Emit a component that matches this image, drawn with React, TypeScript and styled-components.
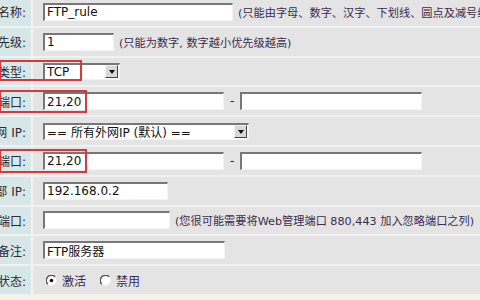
import React from "react";
import styled, { createGlobalStyle } from "styled-components";

const GlobalStyle = createGlobalStyle`
  html, body {
    margin: 0;
    padding: 0;
    background: #f5f3e6;
    overflow: hidden;
  }
  body {
    font-family: "DejaVu Sans", "Noto Sans CJK SC", sans-serif;
  }
`;

const Form = styled.div`
  margin-top: -2px;
  width: 480px;
`;

const Row = styled.div`
  position: relative;
  display: grid;
  grid-template-columns: 33px 1fr;
  height: 29.8px;
  box-sizing: border-box;
  border-bottom: 2px solid #f1f1f1;
`;

const Label = styled.div`
  display: flex;
  justify-content: flex-end;
  align-items: center;
  overflow: hidden;
  white-space: nowrap;
  background: #d7e7e8;
  border-right: 2px solid #f3f3f3;
  padding-right: 5px;
  font-size: 12px;
  color: #2c2a36;
`;

const Field = styled.div`
  display: flex;
  align-items: center;
  gap: 5px;
  padding-left: 10px;
  background: #e4e4e4;
  white-space: nowrap;
  overflow: hidden;
`;

const TextInput = styled.input<{ $w: number }>`
  width: ${(p) => p.$w}px;
  height: 18px;
  box-sizing: border-box;
  flex: none;
  margin: 0;
  padding: 0 2px;
  background: #ffffff;
  border-top: 2px solid #777777;
  border-left: 2px solid #777777;
  border-bottom: 1px solid #f4f4f4;
  border-right: 1px solid #f4f4f4;
  font-family: "DejaVu Sans", "Noto Sans CJK SC", sans-serif;
  font-size: 12px;
  color: #111;
  outline: none;
`;

const Hint = styled.span`
  font-size: 11.2px;
  color: #3d2b4d;
  font-family: "DejaVu Sans", "Noto Sans CJK SC", sans-serif;
`;

const Dash = styled.span`
  font-size: 12px;
  color: #222;
  padding: 0 1px;
`;

const SelectBox = styled.div<{ $w: number }>`
  width: ${(p) => p.$w}px;
  height: 17px;
  box-sizing: border-box;
  flex: none;
  display: flex;
  align-items: center;
  background: #ffffff;
  border-top: 2px solid #777777;
  border-left: 2px solid #777777;
  border-bottom: 1px solid #f4f4f4;
  border-right: 1px solid #f4f4f4;
`;

const SelectText = styled.span`
  flex: 1;
  padding-left: 2px;
  font-size: 12px;
  color: #111;
  overflow: hidden;
`;

const ArrowButton = styled.span`
  width: 13px;
  height: 13px;
  box-sizing: border-box;
  display: flex;
  align-items: center;
  justify-content: center;
  background: #d8d8d8;
  border-top: 1px solid #f4f4f4;
  border-left: 1px solid #f4f4f4;
  border-bottom: 1px solid #444;
  border-right: 1px solid #444;
  margin-right: 1px;
`;

const Arrow = styled.span`
  width: 0;
  height: 0;
  border-left: 3.5px solid transparent;
  border-right: 3.5px solid transparent;
  border-top: 4px solid #111;
`;

const RadioGroup = styled.div`
  display: flex;
  align-items: center;
  padding-left: 3px;
  gap: 14px;
`;

const RadioOption = styled.label`
  display: flex;
  align-items: center;
  gap: 5px;
  font-size: 12px;
  color: #3d2b4d;
`;

const Highlight = styled.div<{ $w: number; $h: number; $top: number }>`
  position: absolute;
  left: -1px;
  top: ${(p) => p.$top}px;
  width: ${(p) => p.$w}px;
  height: ${(p) => p.$h}px;
  box-sizing: border-box;
  border: 2px solid #d33a40;
  pointer-events: none;
`;

const Radio = ({ checked }: { checked?: boolean }) => (
  <svg width="11" height="11" viewBox="0 0 11 11">
    <circle cx="5.5" cy="5.5" r="5" fill="#ffffff" />
    <path d="M9.2 1.8 A5 5 0 0 0 1.8 9.2" fill="none" stroke="#555" strokeWidth="1.4" />
    {checked && <circle cx="5.5" cy="5.5" r="1.8" fill="#111" />}
  </svg>
);

const Select = ({ w, text }: { w: number; text: string }) => (
  <SelectBox $w={w}>
    <SelectText>{text}</SelectText>
    <ArrowButton>
      <Arrow />
    </ArrowButton>
  </SelectBox>
);

export default function App() {
  return (
    <>
      <GlobalStyle />
      <Form>
        <Row>
          <Label>规则名称:</Label>
          <Field>
            <TextInput $w={190} defaultValue="FTP_rule" readOnly />
            <Hint>(只能由字母、数字、汉字、下划线、圆点及减号组成)</Hint>
          </Field>
        </Row>
        <Row>
          <Label>优先级:</Label>
          <Field>
            <TextInput $w={71} defaultValue="1" readOnly />
            <Hint>(只能为数字, 数字越小优先级越高)</Hint>
          </Field>
        </Row>
        <Row>
          <Label>协议类型:</Label>
          <Field>
            <Select w={77} text="TCP" />
          </Field>
          <Highlight $w={83} $h={21} $top={2} />
        </Row>
        <Row>
          <Label>外部端口:</Label>
          <Field>
            <TextInput $w={181} defaultValue="21,20" readOnly />
            <Dash>-</Dash>
            <TextInput $w={182} defaultValue="" readOnly />
          </Field>
          <Highlight $w={88} $h={23} $top={3} />
        </Row>
        <Row>
          <Label>外网 IP:</Label>
          <Field>
            <Select w={206} text="== 所有外网IP (默认) ==" />
          </Field>
        </Row>
        <Row>
          <Label>内部端口:</Label>
          <Field>
            <TextInput $w={181} defaultValue="21,20" readOnly />
            <Dash>-</Dash>
            <TextInput $w={182} defaultValue="" readOnly />
          </Field>
          <Highlight $w={88} $h={24} $top={2} />
        </Row>
        <Row>
          <Label>内部 IP:</Label>
          <Field>
            <TextInput $w={125} defaultValue="192.168.0.2" readOnly />
          </Field>
        </Row>
        <Row>
          <Label>忽略端口:</Label>
          <Field>
            <TextInput $w={127} defaultValue="" readOnly />
            <Hint>(您很可能需要将Web管理端口 880,443 加入忽略端口之列)</Hint>
          </Field>
        </Row>
        <Row>
          <Label>备注:</Label>
          <Field>
            <TextInput $w={182} defaultValue="FTP服务器" readOnly />
          </Field>
        </Row>
        <Row>
          <Label>状态:</Label>
          <Field>
            <RadioGroup>
              <RadioOption>
                <Radio checked />
                激活
              </RadioOption>
              <RadioOption>
                <Radio />
                禁用
              </RadioOption>
            </RadioGroup>
          </Field>
        </Row>
      </Form>
    </>
  );
}
